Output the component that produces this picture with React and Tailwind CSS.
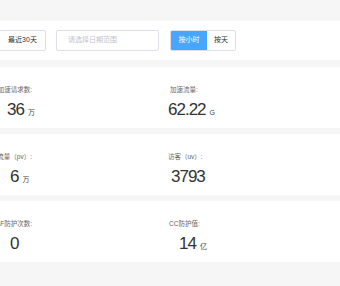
const rows = [
  [
    { label: '加速请求数:', labelMl: '', value: '36', unit: '万', valueMl: 'ml-[7px]' },
    { label: '加速流量:', labelMl: 'ml-[2px]', value: '62.22', unit: 'G', valueMl: 'ml-0' },
  ],
  [
    { label: '访问流量（pv）:', labelMl: '', value: '6', unit: '万', valueMl: 'ml-[10px]' },
    { label: '访客（uv）:', labelMl: 'ml-0', value: '3793', unit: '', valueMl: 'ml-[3px]' },
  ],
  [
    { label: 'WAF防护次数:', labelMl: '', value: '0', unit: '', valueMl: 'ml-[10px]' },
    { label: 'CC防护值:', labelMl: 'ml-[1px]', value: '14', unit: '亿', valueMl: 'ml-[11px]' },
  ],
];

function Stat({ item, left }) {
  return (
    <div className="flex flex-col">
      {left ? (
        <div className="flex w-[32px] justify-end">
          <span className="shrink-0 whitespace-nowrap text-[6.5px] leading-[7px] text-[#666]">
            {item.label}
          </span>
        </div>
      ) : (
        <span className={`whitespace-nowrap text-[6.5px] leading-[7px] text-[#666] ${item.labelMl}`}>
          {item.label}
        </span>
      )}
      <div className={`mt-[7px] flex items-baseline ${item.valueMl}`}>
        <span className="text-[17px] leading-[20px] tracking-[-1px] text-[#333]">{item.value}</span>
        {item.unit && (
          <span className="ml-[4px] text-[7px] text-[#444]">{item.unit}</span>
        )}
      </div>
    </div>
  );
}

export default function App() {
  return (
    <div
      className="flex h-[286px] w-[340px] flex-col overflow-hidden bg-[#f6f6f6]"
      style={{ fontFamily: '"Liberation Sans", "Noto Sans CJK SC", sans-serif' }}
    >
      <div className="h-[21px]" />

      <div className="flex h-[39px] items-center bg-white">
        <button className="-ml-[1px] flex h-[21px] w-[47px] items-center justify-center rounded-[2px] border border-[#dcdfe6] bg-white text-[7px] text-[#333]">
          最近30天
        </button>
        <div className="ml-[10px] flex h-[21px] w-[103px] items-center rounded-[2px] border border-[#dcdfe6] pl-[11px] text-[7px] text-[#c0c4cc]">
          请选择日期范围
        </div>
        <div className="ml-[11px] flex h-[21px] overflow-hidden rounded-[2px] border border-[#dcdfe6] text-[7px]">
          <div className="flex w-[36px] items-center justify-center bg-[#47a6ff] text-white">按小时</div>
          <div className="flex w-[28px] items-center justify-center bg-white text-[#333]">按天</div>
        </div>
      </div>

      <div className="mt-[7px] flex flex-col gap-[6px]">
        {rows.map((row, i) => (
          <div key={i} className="grid h-[61px] grid-cols-[168px_1fr] bg-white pt-[19px]">
            <Stat item={row[0]} left />
            <Stat item={row[1]} />
          </div>
        ))}
      </div>
    </div>
  );
}
